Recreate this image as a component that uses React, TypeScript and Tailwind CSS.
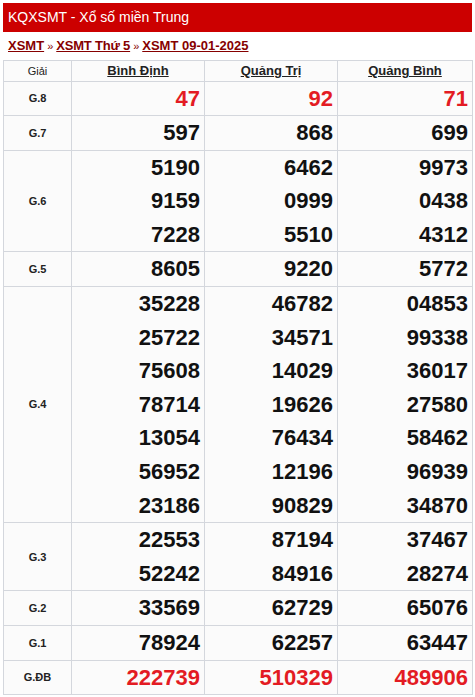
import React from "react";

type Row = { label: string; vals: string[][]; red?: boolean };

const rows: Row[] = [
  { label: "G.8", vals: [["47"], ["92"], ["71"]], red: true },
  { label: "G.7", vals: [["597"], ["868"], ["699"]] },
  {
    label: "G.6",
    vals: [
      ["5190", "9159", "7228"],
      ["6462", "0999", "5510"],
      ["9973", "0438", "4312"],
    ],
  },
  { label: "G.5", vals: [["8605"], ["9220"], ["5772"]] },
  {
    label: "G.4",
    vals: [
      ["35228", "25722", "75608", "78714", "13054", "56952", "23186"],
      ["46782", "34571", "14029", "19626", "76434", "12196", "90829"],
      ["04853", "99338", "36017", "27580", "58462", "96939", "34870"],
    ],
  },
  {
    label: "G.3",
    vals: [
      ["22553", "52242"],
      ["87194", "84916"],
      ["37467", "28274"],
    ],
  },
  { label: "G.2", vals: [["33569"], ["62729"], ["65076"]] },
  { label: "G.1", vals: [["78924"], ["62257"], ["63447"]] },
  { label: "G.ĐB", vals: [["222739"], ["510329"], ["489906"]], red: true },
];

export default function App() {
  return (
    <div
      className="w-[475px] bg-white px-[3px] pt-[3px]"
      style={{ fontFamily: '"Liberation Sans", Arial, sans-serif' }}
    >
      <div className="h-[29px] bg-[#cc0000] pl-[5px] text-[14px] leading-[29px] text-white">
        KQXSMT - Xổ số miền Trung
      </div>
      <div className="flex h-[28px] items-center pl-[5px] text-[13px] font-bold text-[#860000]">
        <span className="underline">XSMT</span>
        <span className="mx-[3px] text-[11px] font-normal">»</span>
        <span className="tracking-[-0.2px] underline">XSMT Thứ 5</span>
        <span className="mx-[3px] text-[11px] font-normal">»</span>
        <span className="underline">XSMT 09-01-2025</span>
      </div>
      <table className="w-[469px] table-fixed border-collapse bg-[#fbfbfb]">
        <colgroup>
          <col className="w-[68px]" />
          <col className="w-[133px]" />
          <col className="w-[133px]" />
          <col className="w-[135px]" />
        </colgroup>
        <thead>
          <tr className="h-[20px]">
            <th className="border border-[#d4d7dd] p-0 text-center text-[11px] font-normal text-[#222]">
              Giải
            </th>
            {["Bình Định", "Quảng Trị", "Quảng Bình"].map((p) => (
              <th
                key={p}
                className="border border-[#d4d7dd] p-0 text-center text-[13px] font-bold text-[#222]"
              >
                <span className="underline">{p}</span>
              </th>
            ))}
          </tr>
        </thead>
        <tbody>
          {rows.map((r) => (
            <tr key={r.label}>
              <td className="border border-[#d4d7dd] p-0 text-center text-[11px] font-bold text-[#222]">
                {r.label}
              </td>
              {r.vals.map((col, i) => (
                <td
                  key={i}
                  className={`border border-[#d4d7dd] p-0 pr-[4px] text-right text-[22px] font-bold ${
                    r.red ? "text-[#e31b23]" : "text-[#111]"
                  }`}
                >
                  {col.map((v, j) => (
                    <div key={j} className="h-[33.6px] leading-[33.6px]">
                      {v}
                    </div>
                  ))}
                </td>
              ))}
            </tr>
          ))}
        </tbody>
      </table>
    </div>
  );
}
